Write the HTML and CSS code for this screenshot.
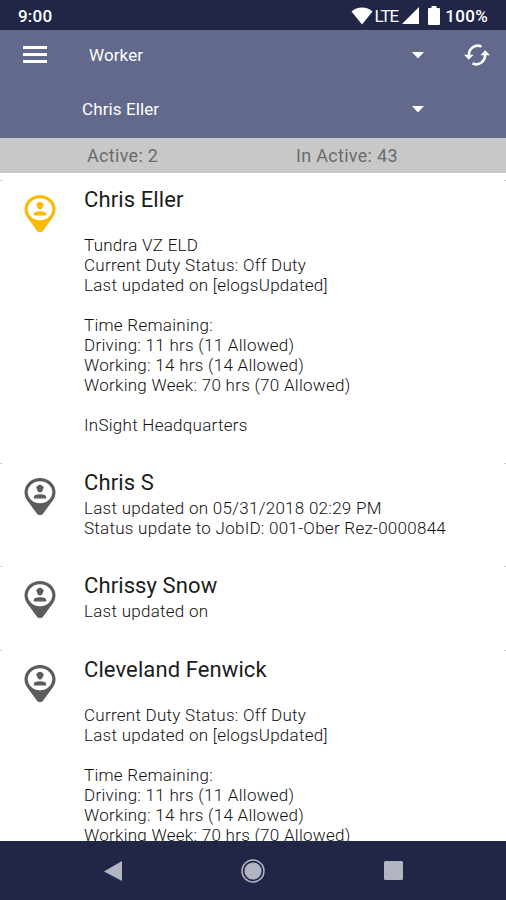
FILE: index.html
```
<!DOCTYPE html>
<html>
<head>
    <meta charset="utf-8">
    <title>Workers</title>
    <link rel="stylesheet" href="styles.css">
</head>
<body>
    <svg width="0" height="0" class="defs">
        <symbol id="pin" viewBox="0 0 32 38">
            <path fill="currentColor" fill-rule="evenodd" d="M16 0C7 0 .5 6.500 .5 14.500c0 3.500 1.500 6.500 3.500 9L12.800 35.500c1.600 2.300 4.800 2.300 6.400 0L28 23.500c2-2.500 3.500-5.500 3.500-9C31.500 6.500 25 0 16 0zM16 3.200a12.300 11 0 1 1 0 22a12.300 11 0 1 1 0-22z"/>
            <path fill="currentColor" d="M16 6.800c1.700 0 2.900 1 3.200 2.300h.6v1.200h-.6c-.2 2.400-1.500 4.200-3.200 4.200s-3-1.800-3.200-4.200h-.6V9.100h.6c.3-1.300 1.500-2.300 3.200-2.300zM9.800 20.400v-1.200c0-2 2-2.900 6.200-2.900s6.200.9 6.200 2.900v1.200z"/>
        </symbol>
    </svg>

    <div class="screen">
        <div class="status-bar">
            <span class="clock">9:00</span>
            <svg class="wifi" width="22" height="18" viewBox="0 0 22 18"><path fill="#fff" d="M.5 4.500C6-.8 16-.8 21.500 4.500L11 17.500z"/></svg>
            <span class="lte">LTE</span>
            <svg class="signal" width="17" height="17" viewBox="0 0 17 17"><path fill="#fff" d="M17 0v17H0z"/></svg>
            <svg class="battery" width="12" height="19" viewBox="0 0 12 19"><path fill="#fff" d="M3.500 0h5v2H11q1 0 1 1v15q0 1-1 1H1q-1 0-1-1V3q0-1 1-1h2.500z"/></svg>
            <span class="percent">100%</span>
        </div>

        <div class="header">
            <div class="header-row">
                <div class="menu"><i></i><i></i><i></i></div>
                <span class="select-text worker">Worker</span>
                <svg class="arrow" width="12" height="7" viewBox="0 0 12 7"><path fill="#fff" d="M0 0h12L6 6.500z"/></svg>
                <svg class="refresh" width="26" height="22" viewBox="0 0 26 22">
                    <g fill="none" stroke="#fff" stroke-width="2.600">
                        <path d="M17.500 2.600C11.500 -.2 4.600 4.200 4.900 11.500"/>
                        <path d="M8.500 19.400c6 2.800 12.900-1.600 12.600-8.900"/>
                    </g>
                    <path fill="#fff" d="M0 10.800h9.600L4.800 15.800zM16.400 11.200H26L21.200 6.200z"/>
                </svg>
            </div>
            <div class="header-row">
                <span class="select-text person">Chris Eller</span>
                <svg class="arrow" width="12" height="7" viewBox="0 0 12 7"><path fill="#fff" d="M0 0h12L6 6.500z"/></svg>
            </div>
        </div>

        <div class="counts">
            <span class="active-count">Active: 2</span>
            <span class="inactive-count">In Active: 43</span>
        </div>

        <div class="list">
            <div class="item">
                <svg class="pin on"><use href="#pin"/></svg>
                <div class="info">
                    <div class="name">Chris Eller</div>
                    <div class="details">
                        <br>
                        Tundra VZ ELD<br>
                        Current Duty Status: Off Duty<br>
                        Last updated on [elogsUpdated]<br>
                        <br>
                        Time Remaining:<br>
                        Driving: 11 hrs (11 Allowed)<br>
                        Working: 14 hrs (14 Allowed)<br>
                        Working Week: 70 hrs (70 Allowed)<br>
                        <br>
                        InSight Headquarters
                    </div>
                </div>
            </div>
            <div class="item">
                <svg class="pin"><use href="#pin"/></svg>
                <div class="info">
                    <div class="name">Chris S</div>
                    <div class="details">
                        Last updated on 05/31/2018 02:29 PM<br>
                        Status update to JobID: 001-Ober Rez-0000844
                    </div>
                </div>
            </div>
            <div class="item short">
                <svg class="pin"><use href="#pin"/></svg>
                <div class="info">
                    <div class="name">Chrissy Snow</div>
                    <div class="details">Last updated on</div>
                </div>
            </div>
            <div class="item">
                <svg class="pin"><use href="#pin"/></svg>
                <div class="info">
                    <div class="name">Cleveland Fenwick</div>
                    <div class="details">
                        <br>
                        Current Duty Status: Off Duty<br>
                        Last updated on [elogsUpdated]<br>
                        <br>
                        Time Remaining:<br>
                        Driving: 11 hrs (11 Allowed)<br>
                        Working: 14 hrs (14 Allowed)<br>
                        Working Week: 70 hrs (70 Allowed)
                    </div>
                </div>
            </div>
        </div>

        <div class="nav-bar">
            <svg width="18" height="20" viewBox="0 0 18 20"><path fill="#b2b5c1" d="M18 0v20L0 10.500z"/></svg>
            <svg width="24" height="24" viewBox="0 0 24 24"><circle cx="12" cy="12" r="11" fill="none" stroke="#b2b5c1" stroke-width="1.500"/><circle cx="12" cy="12" r="8.600" fill="#b2b5c1"/></svg>
            <svg width="19" height="19" viewBox="0 0 19 19"><rect width="19" height="19" rx="1.500" fill="#b2b5c1"/></svg>
        </div>
    </div>
</body>
</html>
```
FILE: styles.css
```
body {
    margin: 0;
    font-family: Roboto, sans-serif;
    background: #fff;
}

svg {
    display: block;
    flex-shrink: 0;
}

.defs {
    position: absolute;
}

.screen {
    display: flex;
    flex-direction: column;
    height: 900px;
    overflow: hidden;
}

.status-bar {
    display: flex;
    align-items: center;
    flex: 0 0 30px;
    padding: 1px 18px 0 18px;
    box-sizing: border-box;
    background: #212647;
    color: #fff;
    font-size: 17px;
    font-weight: 500;
}

.clock {
    flex: 1;
    letter-spacing: 0.2px;
}

.lte {
    margin: 0 4px 0 2px;
    font-size: 17px;
    font-weight: 400;
    letter-spacing: -1px;
}

.battery {
    margin: 0 5px 0 9px;
}

.percent {
    letter-spacing: 0.3px;
}

.header {
    flex: 0 0 108px;
    background: #63698d;
    color: #fff;
}

.header-row {
    display: flex;
    align-items: center;
    height: 50px;
    padding: 0 16px 0 23px;
}

.header-row + .header-row {
    padding: 4px 82px 0 82px;
}

.menu {
    display: flex;
    flex-direction: column;
    gap: 4px;
    width: 24px;
    margin: 0 42px 2px 0;
}

.menu i {
    height: 3px;
    background: #fff;
}

.select-text {
    flex: 1;
    font-size: 17px;
    letter-spacing: 0.1px;
}

.refresh {
    margin-left: 40px;
}

.counts {
    display: flex;
    align-items: center;
    flex: 0 0 35px;
    background: #c8c8c8;
    color: #6b6b6b;
    font-size: 18px;
    letter-spacing: 0.3px;
}

.active-count {
    width: 209px;
    padding-left: 87px;
}

.list {
    flex: 1;
    min-height: 0;
    padding-top: 7px;
    overflow: hidden;
}

/* only the ends of the divider show */
.item {
    display: flex;
    padding: 3px 0 28px 24px;
    background: linear-gradient(to right, #ccc 2px, transparent 2px, transparent 504px, #ccc 504px) no-repeat;
    background-size: 100% 1px;
}

.item.short {
    padding-bottom: 29px;
}

.pin {
    width: 32px;
    height: 38px;
    margin: 12px 28px 0 0;
    color: #5c5c5c;
}

.pin.on {
    color: #fbb90b;
}

.name {
    font-size: 22px;
    line-height: 33px;
    margin-bottom: -1px;
    color: #1c1c1c;
    letter-spacing: 0.1px;
}

.details {
    font-size: 17px;
    font-weight: 300;
    line-height: 20px;
    color: #111;
    letter-spacing: 0.27px;
    white-space: nowrap;
}

.nav-bar {
    display: flex;
    align-items: center;
    justify-content: space-between;
    flex: 0 0 59px;
    padding: 0 103px 0 104px;
    box-sizing: border-box;
    background: #212647;
}
```
